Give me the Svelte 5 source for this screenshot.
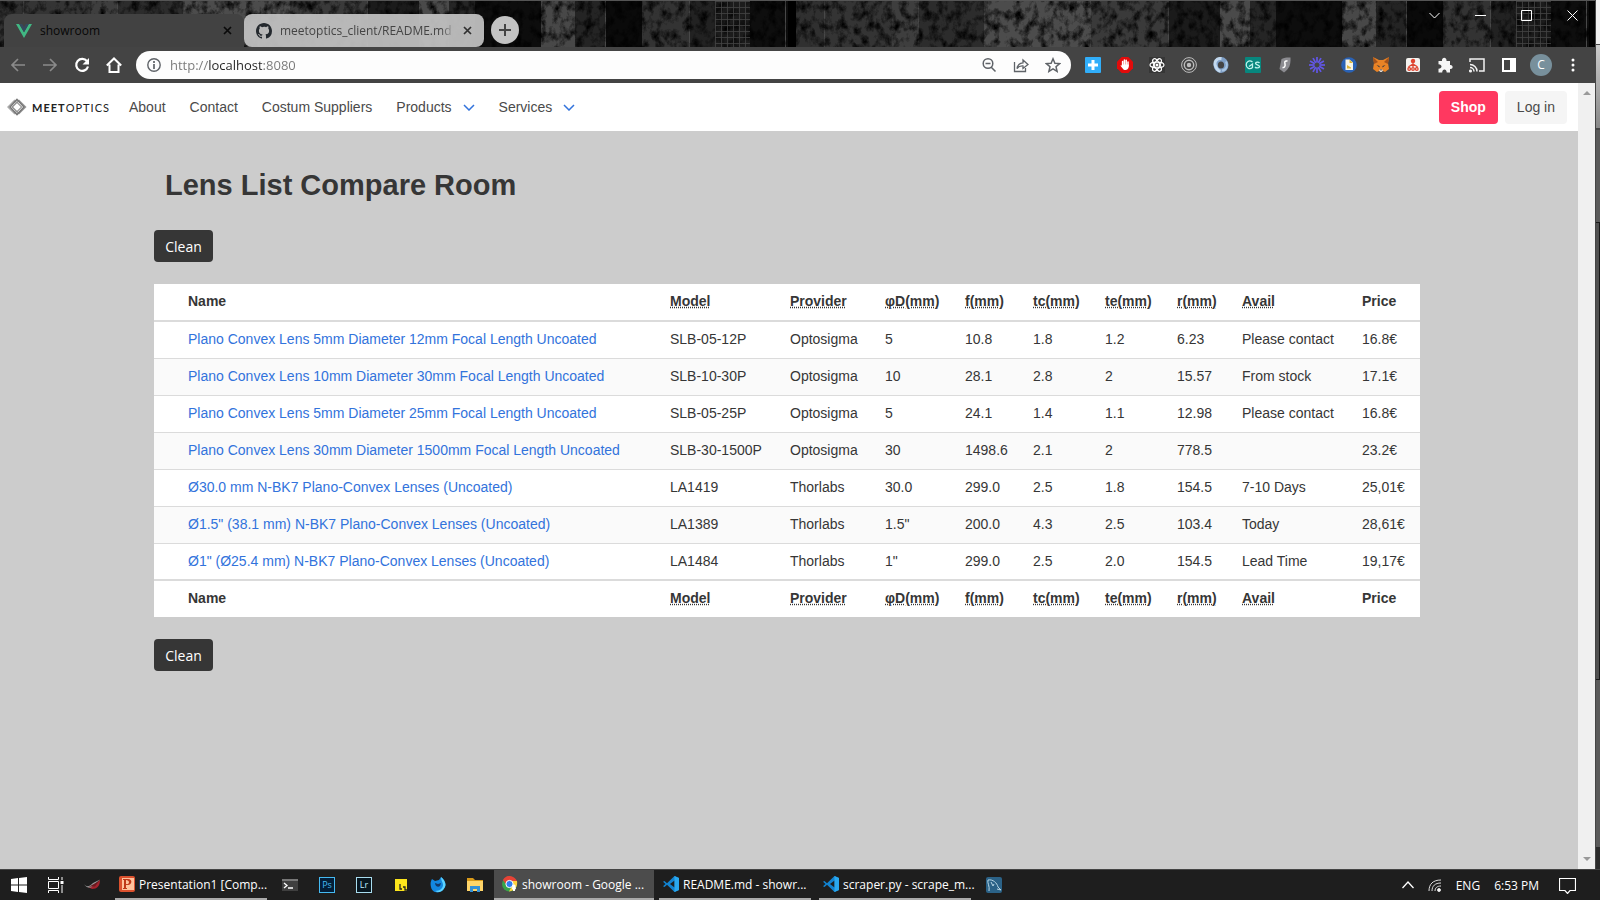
<script>
  const links = ['About', 'Contact', 'Costum Suppliers'];
  const menus = ['Products', 'Services'];
  const heads = ['', 'Name', 'Model', 'Provider', 'φD(mm)', 'f(mm)', 'tc(mm)', 'te(mm)', 'r(mm)', 'Avail', 'Price'];
  const widths = [21, 482, 120, 95, 80, 68, 72, 72, 65, 120, 71];
  const total = widths.reduce((a, b) => a + b, 0);
  const rows = [
    ['Plano Convex Lens 5mm Diameter 12mm Focal Length Uncoated', 'SLB-05-12P', 'Optosigma', '5', '10.8', '1.8', '1.2', '6.23', 'Please contact', '16.8€'],
    ['Plano Convex Lens 10mm Diameter 30mm Focal Length Uncoated', 'SLB-10-30P', 'Optosigma', '10', '28.1', '2.8', '2', '15.57', 'From stock', '17.1€'],
    ['Plano Convex Lens 5mm Diameter 25mm Focal Length Uncoated', 'SLB-05-25P', 'Optosigma', '5', '24.1', '1.4', '1.1', '12.98', 'Please contact', '16.8€'],
    ['Plano Convex Lens 30mm Diameter 1500mm Focal Length Uncoated', 'SLB-30-1500P', 'Optosigma', '30', '1498.6', '2.1', '2', '778.5', '', '23.2€'],
    ['Ø30.0 mm N-BK7 Plano-Convex Lenses (Uncoated)', 'LA1419', 'Thorlabs', '30.0', '299.0', '2.5', '1.8', '154.5', '7-10 Days', '25,01€'],
    ['Ø1.5" (38.1 mm) N-BK7 Plano-Convex Lenses (Uncoated)', 'LA1389', 'Thorlabs', '1.5"', '200.0', '4.3', '2.5', '103.4', 'Today', '28,61€'],
    ['Ø1" (Ø25.4 mm) N-BK7 Plano-Convex Lenses (Uncoated)', 'LA1484', 'Thorlabs', '1"', '299.0', '2.5', '2.0', '154.5', 'Lead Time', '19,17€']
  ];
  const rays = Array.from({ length: 12 }, (_, i) => i * 30);
  // Panels of the window theme: start, width, colour
  const panels = [
    [0, 28, '#303030'], [28, 68, '#343434'], [96, 26, '#3e3e3e'], [122, 66, '#2c2c2c'], [188, 107, '#4c4c4c'], [295, 77, '#3a3a3a'],
    [372, 52, '#1b1b1b'], [424, 30, '#4a4a4a'], [454, 26, '#252525'], [480, 66, '#0d0d0d'], [546, 34, '#484848'], [580, 30, '#242424'],
    [610, 37, '#0a0a0a'], [647, 47, '#333'], [694, 26, '#222'], [720, 35, '#1c1c1c'], [755, 38, '#0e0e0e'], [793, 8, '#000']
  ];
</script>

{#snippet headRow()}
  <tr>
    {#each heads as h, i}
      <th>{#if i > 1 && i < 10}<abbr title={h}>{h}</abbr>{:else}{h}{/if}</th>
    {/each}
  </tr>
{/snippet}

{#snippet code()}
  <svg width="16" height="16" viewBox="0 0 16 16"><path d="M11.500 0 16 2v12l-4.500 2-7.500-7.200L1.500 11 0 10.200 2.500 8 0 5.800 1.500 5 4 7.200zM11.600 4.500 7 8l4.600 3.500z" fill="#1283d0" fill-rule="evenodd"/><path d="M11.500 0 16 2v12l-4.500 2z" fill="#2aa8ee"/></svg>
{/snippet}

<div class="screen">
  <div class="body">
    <div class="window">
      <header class="tabs">
        <svg class="texture" width="100%" height="100%" aria-hidden="true">
          <defs>
            <filter id="grain" x="0" y="0" width="100%" height="100%"><feTurbulence type="fractalNoise" baseFrequency="0.13 0.1" numOctaves="5" seed="8"/><feColorMatrix values="0 0 0 0 0  0 0 0 0 0  0 0 0 0 0  2.200 0 0 0 -0.900"/></filter>
            <pattern id="mesh" width="6" height="6" patternUnits="userSpaceOnUse"><path d="M0 .5h6M.5 0v6" stroke="#444" stroke-width=".8"/></pattern>
            <pattern id="panels" x="-5" width="801" height="47" patternUnits="userSpaceOnUse">
              {#each panels as [x, w, fill]}<rect {x} width={w + 1} height="47" {fill}/>{/each}
              <path d="M28.500 0v47M122.500 0v47M188.500 0v47M372.500 0v47M546.500 0v47M610.500 0v47M694.500 0v47M790.500 0v47" stroke="#484848"/>
            </pattern>
            <pattern id="grid" x="-5" width="801" height="47" patternUnits="userSpaceOnUse"><rect x="720" width="35" height="47" fill="url(#mesh)"/></pattern>
          </defs>
          <rect width="100%" height="100%" fill="url(#panels)"/><rect width="100%" height="100%" filter="url(#grain)"/><rect width="100%" height="100%" fill="url(#grid)"/>
        </svg>
        <div class="tab active">
          <svg width="16" height="14" viewBox="0 0 16 14"><path d="M0 0h3.200L8 8.300 12.800 0H16L8 14z" fill="#41b883"/><path d="M3.200 0h3L8 3.200 9.800 0h3L8 8.300z" fill="#35495e"/></svg>
          <span>showroom</span>
          <button aria-label="Close showroom"><svg width="9" height="9" viewBox="0 0 9 9"><path d="m1 1 7 7m0-7L1 8" stroke="#0a0a0a" stroke-width="1.700"/></svg></button>
        </div>
        <div class="tab other">
          <svg width="16" height="16" viewBox="0 0 16 16"><path fill="#24292e" d="M8 0C3.580 0 0 3.580 0 8c0 3.540 2.290 6.530 5.470 7.590.4.070.55-.17.55-.38 0-.19-.01-.82-.01-1.490-2.010.37-2.530-.49-2.690-.94-.09-.23-.48-.94-.82-1.130-.28-.15-.68-.52-.01-.53.63-.01 1.080.58 1.230.82.72 1.210 1.870.87 2.330.66.07-.52.28-.87.51-1.070-1.780-.2-3.640-.89-3.640-3.950 0-.87.31-1.590.82-2.150-.08-.2-.36-1.020.08-2.120 0 0 .67-.21 2.200.82A7.600 7.600 0 0 1 8 3.860c.68 0 1.360.09 2 .27 1.530-1.040 2.200-.82 2.200-.82.44 1.100.16 1.920.08 2.120.51.56.82 1.270.82 2.150 0 3.070-1.870 3.750-3.650 3.950.29.25.54.73.54 1.480 0 1.070-.01 1.930-.01 2.200 0 .21.15.46.55.38A8.010 8.010 0 0 0 16 8c0-4.420-3.580-8-8-8z"/></svg>
          <span>meetoptics_client/README.md a</span>
          <button aria-label="Close README"><svg width="9" height="9" viewBox="0 0 9 9"><path d="m1 1 7 7m0-7L1 8" stroke="#303030" stroke-width="1.700"/></svg></button>
        </div>
        <button class="plus" aria-label="New tab"><svg width="12" height="12" viewBox="0 0 12 12"><path d="M6 0v12M0 6h12" stroke="#444" stroke-width="2"/></svg></button>
        <div class="controls">
          <button aria-label="Search tabs"><svg width="11" height="11" viewBox="0 0 11 11"><path d="m.5 3 5 5 5-5"/></svg></button>
          <button aria-label="Minimize"><svg width="11" height="11" viewBox="0 0 11 11"><path d="M0 5.500h11"/></svg></button>
          <button aria-label="Maximize"><svg width="11" height="11" viewBox="0 0 11 11"><path d="M.5.5h10v10H.5z"/></svg></button>
          <button aria-label="Close window"><svg width="11" height="11" viewBox="0 0 11 11"><path d="m.5.5 10 10m0-10-10 10"/></svg></button>
        </div>
      </header>

      <div class="toolbar">
        <div class="nav">
          <button aria-label="Back"><svg width="16" height="16" viewBox="0 0 16 16"><path d="M15 8H2m6-6L2 8l6 6" fill="none" stroke="#8a8a8a" stroke-width="1.700"/></svg></button>
          <button aria-label="Forward"><svg width="16" height="16" viewBox="0 0 16 16"><path d="M1 8h13M8 2l6 6-6 6" fill="none" stroke="#8a8a8a" stroke-width="1.700"/></svg></button>
          <button aria-label="Reload"><svg width="16" height="16" viewBox="0 0 16 16"><path d="M13 4.200A6 6 0 1 0 14 9.500" fill="none" stroke="#fff" stroke-width="2.200"/><path d="M15 1v6.500H8.500z" fill="#fff"/></svg></button>
          <button aria-label="Home"><svg width="16" height="16" viewBox="0 0 16 16"><path d="M3.500 7.500V15h9V7.500M.8 8.500 8 1.500l7.200 7" fill="none" stroke="#fff" stroke-width="2"/></svg></button>
        </div>
        <div class="address">
          <label for="url" aria-label="Site information"><svg width="14" height="14" viewBox="0 0 14 14"><circle cx="7" cy="7" r="6.200" fill="none" stroke="#5f6368" stroke-width="1.400"/><path d="M7 6v5M7 3v2" stroke="#5f6368" stroke-width="1.700"/></svg></label>
          <input id="url" aria-label="Address" value="http://localhost:8080" />
          <div class="tools">
            <svg width="16" height="16" viewBox="0 0 16 16"><path d="M10 10l4.500 4.500M4.500 6.500h5"/><circle cx="7" cy="6.500" r="4.800"/></svg>
            <svg width="16" height="16" viewBox="0 0 16 16"><path d="M1.500 5v9.500h11V11M4 11.500C4.500 8 6.500 6 10 5.800V3l5 4.500-5 4V9C7.500 8.800 5.500 9.500 4 11.500z" stroke-width="1.300"/></svg>
            <svg width="16" height="16" viewBox="0 0 16 16"><path d="m8 1.800 1.900 4.400 4.700.4-3.600 3.100 1.100 4.700L8 11.900l-4.100 2.500L5 9.700 1.400 6.600l4.700-.4z"/></svg>
          </div>
        </div>
        <div class="extensions">
          <svg viewBox="0 0 16 16"><rect width="16" height="16" rx="1" fill="#31aefa"/><path d="M8 3v10M3 8h10" stroke="#fff" stroke-width="3"/></svg>
          <svg viewBox="0 0 16 16"><path d="M4.700 0h6.600L16 4.700v6.600L11.300 16H4.700L0 11.300V4.700z" fill="#e30b0b"/><path d="m5.600 8.500V4.500M7.400 8V3M9.200 8V3.300M11 9V5" stroke="#fff" stroke-width="1.500" stroke-linecap="round"/><path d="M4.900 7.500h6.800V10c-.5 3.500-4.500 4-6 1.500L3.500 8.800c.5-.8 1.200-.5 1.400 0z" fill="#fff"/></svg>
          <svg viewBox="0 0 16 16"><rect width="16" height="16" fill="#363636"/><g fill="none" stroke="#fff" stroke-width="1.200"><ellipse cx="8" cy="8" rx="7" ry="2.800"/><ellipse cx="8" cy="8" rx="7" ry="2.800" transform="rotate(60 8 8)"/><ellipse cx="8" cy="8" rx="7" ry="2.800" transform="rotate(120 8 8)"/></g><circle cx="8" cy="8" r="1.500" fill="#fff"/></svg>
          <svg viewBox="0 0 16 16" fill="none" stroke="#bdbdbd"><circle cx="8" cy="8" r="7.400"/><circle cx="8" cy="8" r="4.700" stroke-width="1.400"/><circle cx="8" cy="8" r="1.200" fill="#ccc" stroke-width="2"/></svg>
          <svg viewBox="0 0 16 16" fill="none"><ellipse cx="8" cy="8" rx="5.300" ry="5.800" stroke="#7f9fc6" stroke-width="4.400"/><path d="M8.500 1.500C3 1 1 5 2.500 9s3.500 5 5 5.300" stroke="#c3d9ee" stroke-width="3"/><path d="M9 13.500c4.500-.5 6-5 4-9" stroke="#a9c5e2" stroke-width="2"/></svg>
          <svg viewBox="0 0 16 16"><rect width="16" height="16" rx="1" fill="#07877e"/><path d="M7.500 5C4 2.500 1 5 1.200 8s3.500 5 6.300 2.500V7L4 9.500M14.500 6c-1-1.200-4-1-4 .5s4 1.200 4 3-3.500 1.800-4.500.5" stroke="#bdf2eb" stroke-width="1.300" fill="none"/></svg>
          <svg viewBox="0 0 16 16"><path d="M4.500 2C8 .5 10 .3 13.500.5c.3 7-1 11-6.500 15L2.500 12z" fill="#8c8c91"/><path d="M10.500 4C7.500 3.500 7.500 5 8 7s-.5 4-2.500 3.500" stroke="#fff" stroke-width="1.500" fill="none"/></svg>
          <svg viewBox="0 0 16 16" stroke="#6257e8" stroke-width="1.700">{#each rays as r}<path d="M8 0v5.500" transform={`rotate(${r} 8 8)`}/>{/each}</svg>
          <svg viewBox="0 0 16 16"><circle cx="8" cy="8" r="7.800" fill="#2a62b5"/><path d="M4.500 2.500h4l3.500 3v7.500H4.500z" fill="#f8f6e8"/><path d="M8.500 2.500V6H12M6 8l4 2.500v1H6z" fill="#dfb638"/></svg>
          <svg viewBox="0 0 16 16"><path d="m0 0 6 3h4l6-3-1 6 1 6-4 3-2-1H6l-2 1-4-3 1-6z" fill="#e98325"/><path d="m0 0 5 5-4 2zm16 0-5 5 4 2z" fill="#a4521b"/><path d="m3.500 8 3 1v1.500zm9 0-3 1v1.500z" fill="#273447"/><path d="m6 13 2-1 2 1-1 2H7z" fill="#ded5ce"/><path d="M7 12.500h2l-1 1.200z" fill="#222"/></svg>
          <svg viewBox="0 0 16 16"><rect x="1" y="1" width="14" height="14" rx="2" fill="#f4f2ef"/><g fill="none" stroke="#df4530" stroke-width="1.300"><circle cx="8" cy="4" r="1.600" fill="#df4530"/><path d="M8 6v4M4 9.500 8 7l4 2.500M4 9v2m8-2v2"/><circle cx="4.200" cy="12" r="1.300"/><circle cx="8" cy="12" r="1.300"/><circle cx="11.800" cy="12" r="1.300"/></g></svg>
          <svg viewBox="0 0 16 16"><path d="M1.500 4H5c-.6-4.300 5-4.300 4.500 0H13v4c3.500-.5 3.500 4.500 0 4v3.500H9.700c0-4-4.500-4-4.500 0H1.500v-3.800c4 0 4-4.500 0-4.500z" fill="#f5f5f5"/></svg>
          <svg viewBox="0 0 16 16" fill="none" stroke="#f2f2f2" stroke-width="1.500"><path d="M1 5V2h14v12h-5M1 7.500a7 7 0 0 1 7 7M1 10.500a4 4 0 0 1 4 4"/><circle cx="1.500" cy="14" r=".8" fill="#fff"/></svg>
          <svg viewBox="0 0 16 16"><path d="M2 2h12v12H2zM10 2v12" fill="none" stroke="#fff" stroke-width="2"/><path d="M10 2h4v12h-4z" fill="#fff"/></svg>
          <b class="avatar">C</b>
          <svg viewBox="0 0 16 16" fill="#fff"><circle cx="8" cy="3" r="1.500"/><circle cx="8" cy="8" r="1.500"/><circle cx="8" cy="13" r="1.500"/></svg>
        </div>
      </div>

      <div class="viewport">
        <div class="page">
          <nav>
            <a class="brand" href="#home"><svg width="20" height="18" viewBox="0 0 20 18" fill="none"><path d="m7.500 2.500 6.500 6.500-6.500 6.500L1 9z" stroke="#aaa" stroke-width="1.500"/><path d="m12 2.500 6.500 6.500-6.500 6.500L5.500 9z" stroke="#999" stroke-width="1.500"/><path d="m10 1.500 7 7.500-7 7.500L3 9z" stroke="#777" stroke-width="1.600"/><path d="m10 4.500 4.500 4.500-4.500 4.500L5.500 9z" fill="#fff" stroke="#777"/></svg><span><b>MEET</b>OPTICS</span></a>
            <div class="links">
              {#each links as l}<a href="#{l}">{l}</a>{/each}
              {#each menus as m}<a class="menu" href="#{m}">{m}<svg width="12" height="8" viewBox="0 0 12 8"><path d="m1 2 5 5 5-5" fill="none" stroke="#3273dc" stroke-width="1.500"/></svg></a>{/each}
            </div>
            <div class="account"><button class="shop">Shop</button><button class="login">Log in</button></div>
          </nav>
          <main>
            <h1>Lens List Compare Room</h1>
            <button class="clean">Clean</button>
            <table>
              <colgroup>{#each widths as w}<col style="width:{w / total * 100}%" />{/each}</colgroup>
              <thead>{@render headRow()}</thead>
              <tbody>
                {#each rows as row}
                  <tr><td></td>{#each row as cell, i}<td>{#if i === 0}<a href="#lens">{cell}</a>{:else}{cell}{/if}</td>{/each}</tr>
                {/each}
              </tbody>
              <tfoot>{@render headRow()}</tfoot>
            </table>
            <button class="clean">Clean</button>
          </main>
        </div>
        <div class="scroll"><i class="up"></i><i class="down"></i></div>
      </div>
    </div>
    <div class="behind"><i></i><s></s><b></b></div>
  </div>

  <footer>
    <button class="launch" aria-label="Start"><svg width="16" height="16" viewBox="0 0 16 16"><path d="M0 2 7 1v6.500H0zm8-1 8-1v7.500H8zM0 8.500h7V15l-7-1zm8 0h8V16l-8-1z" fill="#fff"/></svg></button>
    <button class="launch" aria-label="Task view"><svg width="16" height="16" viewBox="0 0 16 16" fill="none" stroke="#fff"><path d="M.5 0v2.500h10V0M.5 4.500h10v7H.5zM.5 16v-2.500h10V16M14 0v3M14 8v8"/><path d="M12.500 5.500h3" stroke-width="3"/></svg></button>
    <button class="launch" aria-label="Republic of Gamers"><svg width="17" height="12" viewBox="0 0 17 12"><path d="M4 8c4 0 7-3 12-7 0 6-3 9-8 9z" fill="#a3222c"/><path d="M0 5c3 4 6 2 9-1l7-3.500-9 8C4 9 2 8 0 5z" fill="#999"/><path d="M4.500 8 15 2l-4 5.500H7z" fill="#6b1a20"/></svg></button>
    <button class="task"><svg width="16" height="16" viewBox="0 0 16 16"><rect width="16" height="16" rx="2" fill="#db512e"/><path d="M3 2h12v12H3z" fill="#ffc29c"/><path d="M5 3h4c5 0 4 6 0 6H7v3h1v1H4v-1h1V4H4V3zm2 1v4c4 1 4-4 0-4" fill="#bf3717"/></svg><span>Presentation1 [Comp...</span></button>
    <div class="apps">
      <button aria-label="Terminal"><svg viewBox="0 0 16 16"><rect y="2" width="16" height="12" fill="#3f3f3f"/><path d="M0 2h16v2H0z" fill="#777"/><path d="m2 6 3 2.500L2 11M6 11h5" stroke="#fff" stroke-width="1.300" fill="none"/></svg></button>
      <button aria-label="Photoshop"><svg viewBox="0 0 16 16"><rect x=".5" y=".5" width="15" height="15" fill="#041e38" stroke="#45baf2"/><text x="8" y="11" fill="#45baf2" text-anchor="middle" font-size="9">Ps</text></svg></button>
      <button aria-label="Lightroom"><svg viewBox="0 0 16 16"><rect x=".5" y=".5" width="15" height="15" fill="#081720" stroke="#a9ddef"/><text x="8" y="11" fill="#bcecff" text-anchor="middle" font-size="9">Lr</text></svg></button>
      <button aria-label="Notes"><svg viewBox="0 0 16 16"><path d="M2 2h12v12H2z" fill="#fde51c"/><path d="M7 7v5h2M10 10h2v3h2" stroke="#222" fill="none" stroke-width="1.300"/></svg></button>
      <button aria-label="Firefox"><svg viewBox="0 0 16 16"><path d="M2 2 5 4l4-1 2-3c5 4 6 9 2 13s-11 3-12-3C0 6 1 4 2 2z" fill="#1387df"/><path d="M11 0c5 4 6 9 2 13-3 3-6 2-8 1 5 0 8-3 8-6 0-3-2-4-2-8" fill="#5bd3ff"/><path d="m5 6 3 1 3-1-1 3c-2 2-5 0-5-3" fill="#123968"/></svg></button>
      <button aria-label="Files"><svg viewBox="0 0 16 16"><path d="M0 1h6l2 2h8v11H0z" fill="#d99a19"/><path d="M0 4h16v10H0z" fill="#ffd569"/><path d="M3 15V9h10v6h-3v-3H6v3z" fill="#3591d6"/></svg></button>
    </div>
    <button class="task current"><svg width="16" height="16" viewBox="0 0 16 16"><circle cx="7.500" cy="8" r="7.500" fill="#37a44a"/><path d="M1 4C4-2 12-1 15 5H7.500L4.500 9z" fill="#e74236"/><path d="M15 5c1 5-2 10-8 10.500L11 8 9 5z" fill="#ffd13f"/><circle cx="7.500" cy="8" r="3.600" fill="#317df0" stroke="#fff"/><path d="M10.500 9c2-1.500 3.500 0 3 2l.5 2-1 .5V15h-2v-1.500l-1-.5z" fill="#fff"/></svg><span>showroom - Google ...</span></button>
    <button class="task">{@render code()}<span>README.md - showr...</span></button>
    <button class="task">{@render code()}<span>scraper.py - scrape_m...</span></button>
    <button class="launch" aria-label="MySQL Workbench"><svg width="16" height="16" viewBox="0 0 16 16"><rect width="16" height="16" rx="2" fill="#2b6287"/><path d="M3 14C4 9 1 6 2 3c5-1 9 3 10 7l3 3-4-1M5 5l2 4 1-2" fill="none" stroke="#b7d5e4"/></svg></button>
    <div class="tray">
      <svg width="12" height="8" viewBox="0 0 12 8"><path d="m.5 7 5.500-6 5.500 6" fill="none" stroke="#fff" stroke-width="1.300"/></svg>
      <svg width="14" height="13" viewBox="0 0 14 13" fill="none" stroke="#ddd"><path d="M1 12C1 5 5 1 13 1M4 12c0-5 3-8 9-8M7 12c0-3 2-5 6-5"/><circle cx="11" cy="11" r="1.500" fill="#fff"/></svg>
      <div class="clock"><span>ENG</span><time>6:53 PM</time></div>
      <svg width="17" height="17" viewBox="0 0 17 17"><path d="M.5 1.500h16v12H11l-2.500 3-2.500-3H.5z" fill="none" stroke="#fff" stroke-width="1.200"/></svg>
    </div>
  </footer>
</div>

<style>
  :global(body) { margin: 0; }
  * { box-sizing: border-box; }
  .screen { min-height: 100vh; display: flex; flex-direction: column; font-family: "Open Sans", "Noto Sans", sans-serif; font-size: 12px; }
  button { border: 0; padding: 0; background: none; font: inherit; color: inherit; display: flex; align-items: center; justify-content: center; }
  svg { display: block; flex-shrink: 0; }
  a { color: inherit; text-decoration: none; }
  .body { flex: 1; display: flex; }
  .window { flex: 1; min-width: 0; display: flex; flex-direction: column; border-right: 1px solid #444; }
  .behind { width: 4px; background: #5a5a5a; display: flex; flex-direction: column; }
  .behind i { height: 130px; background: linear-gradient(#eee 0 44px, #444 44px 45px, #ccc 45px, #888); border-bottom: 2px solid #444; }
  .behind s { margin-top: 92px; height: 458px; background: #505050; border: solid #181818; border-width: 1px 1px 1px 0; }
  .behind b { margin-top: auto; height: 22px; background: #2b2b2b; }
  .tabs { height: 47px; padding: 13px 0 0 4px; display: flex; position: relative; border-top: 1px solid #555; }
  .texture { position: absolute; inset: 0; }
  .tab { position: relative; width: 240px; height: 33px; display: flex; align-items: center; gap: 8px; padding: 0 12px; }
  .tab span { flex: 1; min-width: 0; white-space: nowrap; }
  .active { background: #424242; border-radius: 8px 8px 0 0; color: #070707; }
  .other { background: #c0c0c0f0; border-radius: 8px; color: #444; }
  .other span { mask-image: linear-gradient(90deg, #000 92%, transparent); }
  .plus { position: relative; width: 28px; height: 28px; margin: 2px 0 0 7px; border-radius: 50%; background: #c3c3c3; }
  .controls { position: relative; margin-left: auto; display: flex; height: 28px; margin-top: -13px; }
  .controls button { width: 46px; }
  .controls svg { fill: none; stroke: #fff; }
  .toolbar { height: 36px; padding: 0 14px 0 10px; background: #444; display: flex; align-items: center; gap: 14px; }
  .nav { display: flex; gap: 16px; }
  .address { flex: 1; min-width: 180px; height: 28px; padding: 0 10px 0 11px; border-radius: 14px; background: #fdfdfd; display: flex; align-items: center; gap: 9px; }
  input { flex: 1; min-width: 0; border: 0; padding: 0; background: linear-gradient(90deg, #777 38px, #222 38px 92px, #777 92px); background-clip: text; font: 13px "Open Sans", sans-serif; color: transparent; outline: 0; }
  .tools { display: flex; gap: 16px; fill: none; stroke: #5f6368; stroke-width: 1.5; }
  .extensions { display: flex; align-items: center; gap: 16px; }
  .extensions svg { width: 16px; height: 16px; }
  .avatar { width: 22px; height: 22px; margin: 0 -3px; border-radius: 50%; background: #78909c; color: #fff; font-weight: 400; line-height: 22px; text-align: center; }
  .viewport { flex: 1; display: flex; }
  .page { flex: 1; min-width: 0; background: #ccc; color: #363636; font-family: "Liberation Sans", Arial, sans-serif; font-size: 14px; }
  .scroll { width: 17px; padding: 8px 0; background: #f0f0f0; display: flex; flex-direction: column; align-items: center; justify-content: space-between; }
  .up, .down { border: 4px solid transparent; border-top-width: 0; border-bottom: 4px solid #999; }
  .down { border-width: 4px 4px 0; border-top-color: #999; }
  nav { height: 48px; padding: 0 11px 0 7px; background: #fff; display: flex; align-items: center; gap: 19px; color: #4a4a4a; }
  .links { display: flex; align-items: center; gap: 24px; }
  .brand { display: flex; align-items: center; gap: 5px; font: 11px Lato, sans-serif; letter-spacing: 1px; color: #222; }
  .menu { display: flex; align-items: center; gap: 11px; }
  .account { margin-left: auto; display: flex; gap: 7px; }
  .account button { height: 33px; padding: 0 12px; border-radius: 4px; }
  .account .shop { background: #ff3860; color: #fff; font-weight: 700; }
  .account .login { background: #f5f5f5; }
  main { padding: 36px 158px 36px 154px; }
  h1 { margin: 0 0 27px 11px; font-size: 29px; line-height: 36px; }
  .clean { width: 59px; height: 32px; border-radius: 4px; background: #363636; color: #fff; font-family: "Open Sans", sans-serif; font-size: 14px; }
  table { width: 100%; margin: 22px 0; background: #fff; border-collapse: separate; border-spacing: 0; table-layout: fixed; }
  th, td { height: 37px; padding: 0 0 2px 13px; text-align: left; white-space: nowrap; border-bottom: 1px solid #dbdbdb; }
  thead th { height: 38px; border-bottom-width: 2px; }
  tbody tr:nth-child(even) { background: #fafafa; }
  tbody tr:last-child td { border-bottom-width: 2px; }
  tfoot th { height: 36px; border-bottom: 0; }
  td a { color: #3273dc; }
  abbr { text-decoration: underline dotted; }
  footer { height: 31px; display: flex; background: #1e1e1e; border-top: 1px solid #444; color: #fff; }
  .launch { width: 37px; }
  .task { width: 152px; margin: 0 4px; padding: 0 4px; gap: 4px; justify-content: flex-start; border-bottom: 2px solid #aaa; white-space: nowrap; }
  .current { width: 160px; margin: 0 1px; padding-left: 8px; background: #4c4c4c; }
  .apps { display: flex; }
  .apps button { width: 37px; }
  .apps svg { width: 16px; height: 16px; }
  .tray { margin-left: auto; padding-right: 24px; display: flex; align-items: center; gap: 14px; }
  .clock { display: flex; gap: 14px; padding-right: 6px; }
</style>
